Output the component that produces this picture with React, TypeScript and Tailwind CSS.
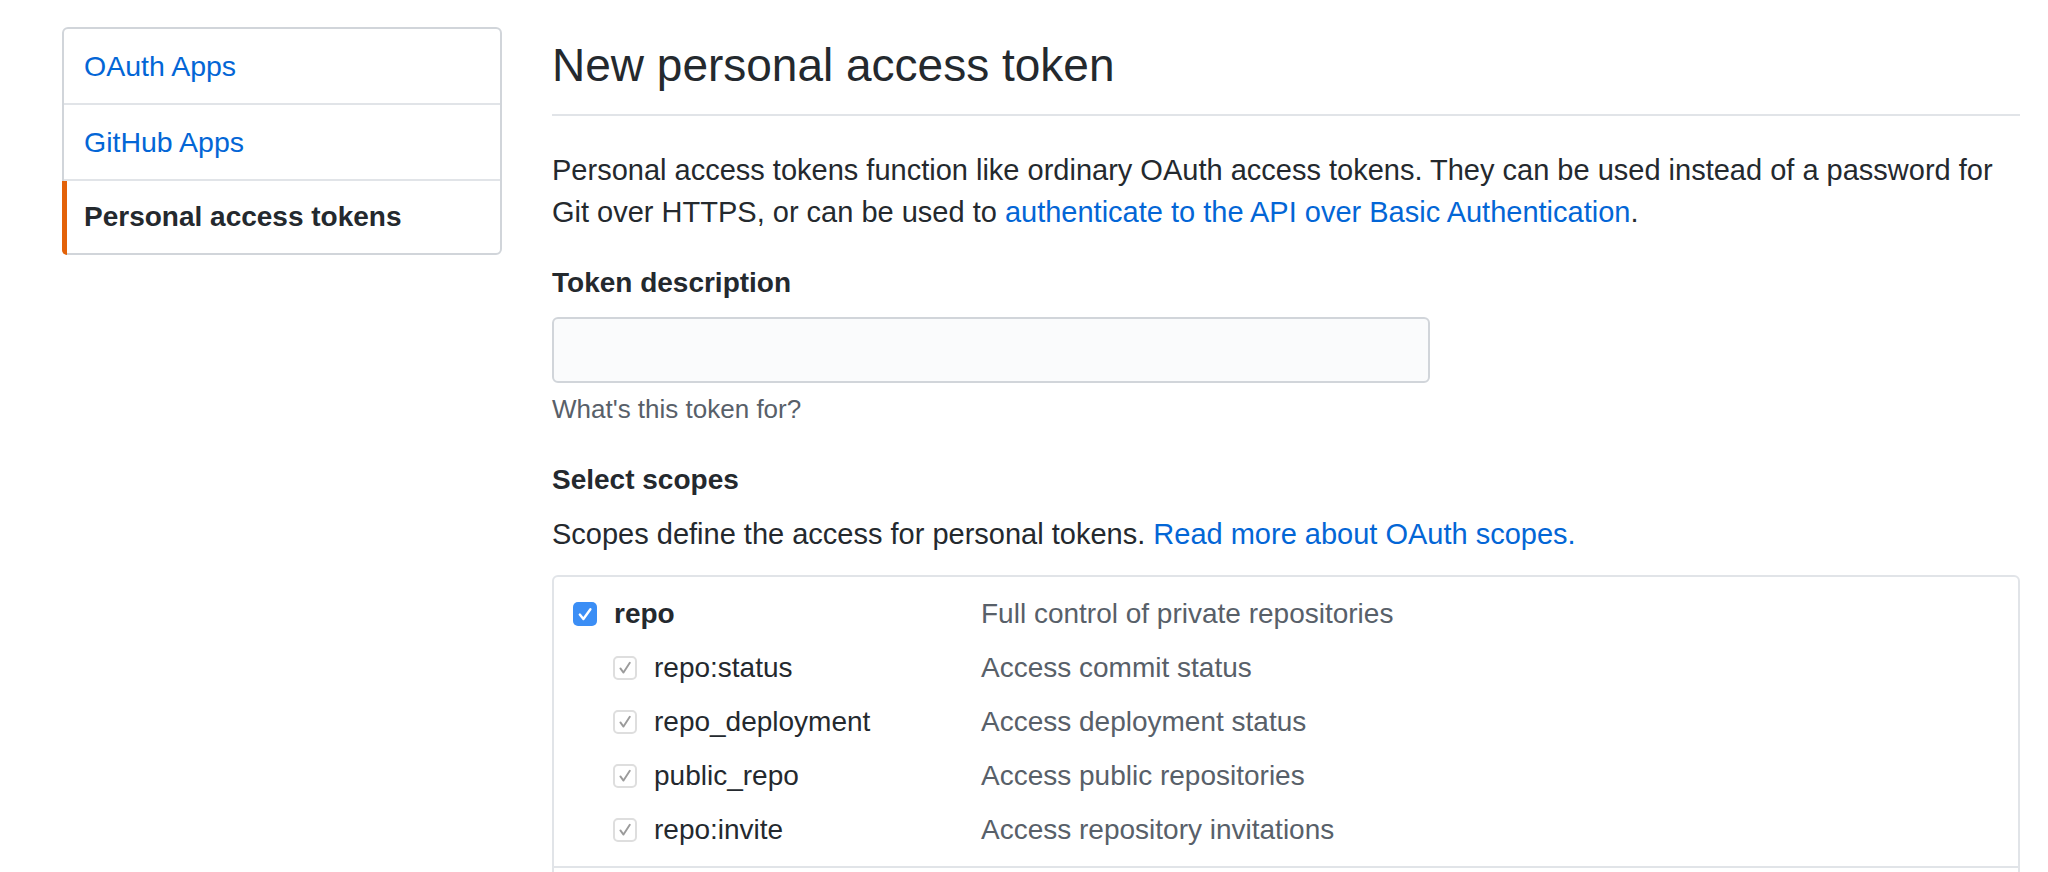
import React from "react";

function BlueBox() {
  return (
    <span className="flex h-[24px] w-[24px] shrink-0 items-center justify-center rounded-[5px] bg-[#3b8ef5]">
      <svg viewBox="0 0 24 24" className="h-[24px] w-[24px]">
        <path d="M6.8 12.6l3.6 4.4L17.4 7.2" fill="none" stroke="#ffffff" strokeWidth="2.4" strokeLinecap="round" strokeLinejoin="round" />
      </svg>
    </span>
  );
}

function GrayBox() {
  return (
    <span className="flex h-[24px] w-[24px] shrink-0 items-center justify-center rounded-[5px] border-2 border-[#dedede] bg-white">
      <svg viewBox="0 0 20 20" className="h-[20px] w-[20px]">
        <path d="M5.4 10.4l3.1 4.2L14.8 4.8" fill="none" stroke="#9b9b9b" strokeWidth="1.9" strokeLinecap="round" strokeLinejoin="round" />
      </svg>
    </span>
  );
}

type Scope = { name: string; desc: string; parent?: boolean };

const repoScopes: Scope[] = [
  { name: "repo", desc: "Full control of private repositories", parent: true },
  { name: "repo:status", desc: "Access commit status" },
  { name: "repo_deployment", desc: "Access deployment status" },
  { name: "public_repo", desc: "Access public repositories" },
  { name: "repo:invite", desc: "Access repository invitations" },
];

function ScopeRow({ s }: { s: Scope }) {
  return (
    <div className="flex h-[54px] items-center">
      <div className={s.parent ? "flex w-[408px] shrink-0 items-center gap-[17px]" : "flex w-[408px] shrink-0 items-center gap-[17px] pl-[40px]"}>
        {s.parent ? <BlueBox /> : <GrayBox />}
        <span className={s.parent ? "text-[28px] font-bold leading-[42px] text-[#24292e]" : "text-[28px] leading-[42px] text-[#24292e]"}>
          {s.name}
        </span>
      </div>
      <span className="text-[28px] leading-[42px] text-[#586069]">{s.desc}</span>
    </div>
  );
}

export default function App() {
  return (
    <div className="flex min-h-[872px] gap-[50px] bg-white pl-[62px] pr-[28px] pt-[27px] font-['Liberation_Sans',Arial,sans-serif] text-[#24292e]">
      <nav className="w-[440px] shrink-0 self-start rounded-[6px] border-2 border-[#d1d5da] bg-white">
        <a className="flex h-[76px] items-center border-b-2 border-[#e1e4e8] pl-[20px] text-[28.5px] text-[#0366d6]">
          OAuth Apps
        </a>
        <a className="flex h-[76px] items-center border-b-2 border-[#e1e4e8] pl-[20px] text-[28.5px] text-[#0366d6]">
          GitHub Apps
        </a>
        <a className="relative flex h-[72px] items-center pl-[20px] text-[28px] font-bold text-[#24292e]">
          <span className="absolute bottom-[-2px] left-[-2px] top-0 w-[5px] rounded-bl-[5px] bg-[#e36209]" />
          Personal access tokens
        </a>
      </nav>

      <main className="min-w-0 flex-1 pt-[9px]">
        <h1 className="border-b-2 border-[#e1e4e8] pb-[20px] text-[46px] font-normal leading-[58px] text-[#24292e]">
          New personal access token
        </h1>

        <p className="mt-[33px] text-[29px] leading-[42px]">
          Personal access tokens function like ordinary OAuth access tokens. They can be used instead of a password for Git over HTTPS, or can be used to{" "}
          <a className="text-[#0366d6]">authenticate to the API over Basic Authentication</a>.
        </p>

        <div className="mt-[29px] text-[28px] font-bold leading-[42px]">Token description</div>
        <div className="mt-[13px] h-[66px] w-[878px] rounded-[6px] border-2 border-[#d1d5da] bg-[#fafbfc]" />
        <div className="mt-[8px] text-[26px] leading-[36px] text-[#586069]">What's this token for?</div>

        <div className="mt-[32px] text-[28px] font-bold leading-[42px]">Select scopes</div>
        <p className="mt-[12px] text-[29px] leading-[42px]">
          Scopes define the access for personal tokens.{" "}
          <a className="text-[#0366d6]">Read more about OAuth scopes.</a>
        </p>

        <div className="mt-[20px] rounded-[6px] border-2 border-[#e1e4e8]">
          <div className="pb-[9px] pl-[19px] pt-[10px]">
            {repoScopes.map((s) => (
              <ScopeRow key={s.name} s={s} />
            ))}
          </div>
          <div className="h-[40px] border-t-2 border-[#e1e4e8]" />
        </div>
      </main>
    </div>
  );
}
